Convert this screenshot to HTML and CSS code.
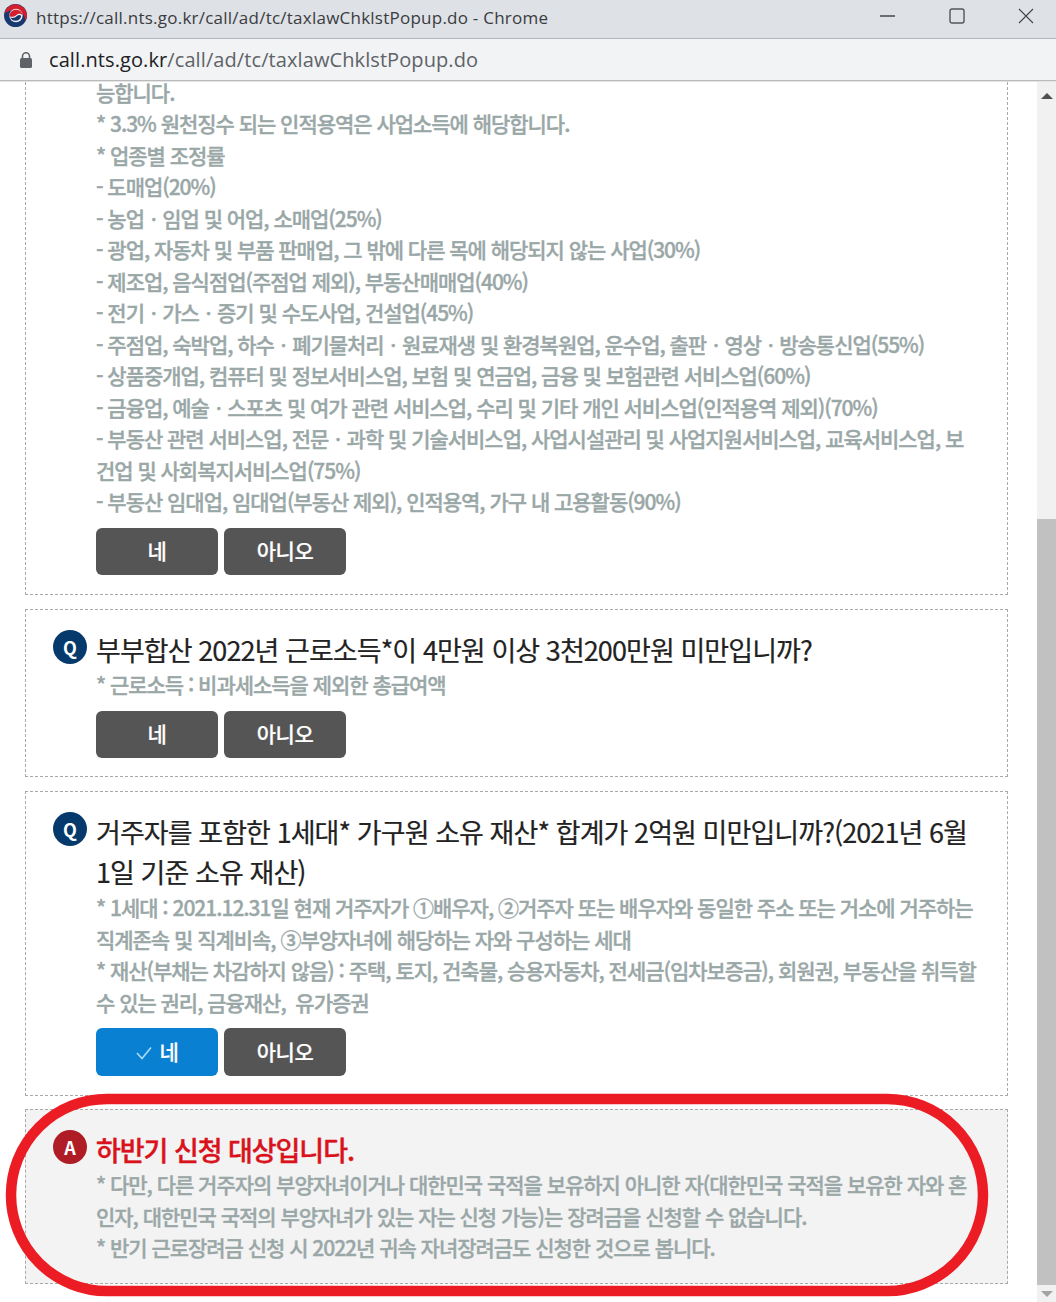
FILE: index.html
```html
<!DOCTYPE html>
<html lang="ko">
<head>
<meta charset="utf-8">
<title>taxlawChklstPopup</title>
<link rel="stylesheet" href="styles.css">
</head>
<body>
<div class="window">
  <header class="titlebar">
    <svg class="emblem" viewBox="0 0 24 24" aria-hidden="true">
      <circle cx="12" cy="12" r="12" fill="#17396f"/>
      <path d="M0.6 9.5A11.8 11.8 0 0 1 23.9 12.5C23.8 14.5 23 16.5 22 17.5C22.5 12 18 6 12 6C7 6 3 8.5 0.6 9.5Z" fill="#d4202e"/>
      <circle cx="12.5" cy="12" r="7" fill="#f3f3f5"/>
      <path d="M5.5 12.5C6 8 9.5 6 13 6C16.5 6 19.5 9 19.5 12C18 9.5 15 9.5 13 11.5C11 13.5 8 14 5.5 12.5Z" fill="#d4202e"/>
      <path d="M6.5 14C9 15 11.5 14.5 13.5 12.5C15 11 17 11 18 12.5C17.5 15.5 15 17.5 12 17.5C9.5 17.5 7.5 16 6.5 14Z" fill="#17396f"/>
    </svg>
    <span class="window-title">https://call.nts.go.kr/call/ad/tc/taxlawChklstPopup.do - Chrome</span>
    <div class="window-controls">
      <svg class="ctl" viewBox="0 0 16 16" aria-hidden="true"><path d="M0 8H15" stroke="#222" stroke-width="1.2"/></svg>
      <svg class="ctl" viewBox="0 0 16 16" aria-hidden="true"><rect x="1" y="1" width="14" height="14" rx="2" fill="none" stroke="#555" stroke-width="1.4"/></svg>
      <svg class="ctl" viewBox="0 0 16 16" aria-hidden="true"><path d="M1 1L15 15M15 1L1 15" stroke="#444" stroke-width="1.1"/></svg>
    </div>
  </header>
  <div class="addressbar">
    <svg class="lock" viewBox="0 0 14 18" aria-hidden="true">
      <path d="M3.5 8V5.2a3.5 3.5 0 0 1 7 0V8" fill="none" stroke="#5f6368" stroke-width="1.6"/>
      <rect x="1" y="7" width="12" height="10" rx="1.5" fill="#5f6368"/>
    </svg>
    <span class="url"><span class="url-host">call.nts.go.kr</span>/call/ad/tc/taxlawChklstPopup.do</span>
  </div>
  <div class="viewport">
    <main class="content">
      <section class="card card-clipped">
        <p class="note">능합니다.<br>* 3.3% 원천징수 되는 인적용역은 사업소득에 해당합니다.<br>* 업종별 조정률<br>- 도매업(20%)<br>- 농업ㆍ임업 및 어업, 소매업(25%)<br>- 광업, 자동차 및 부품 판매업, 그 밖에 다른 목에 해당되지 않는 사업(30%)<br>- 제조업, 음식점업(주점업 제외), 부동산매매업(40%)<br>- 전기ㆍ가스ㆍ증기 및 수도사업, 건설업(45%)<br>- 주점업, 숙박업, 하수ㆍ폐기물처리ㆍ원료재생 및 환경복원업, 운수업, 출판ㆍ영상ㆍ방송통신업(55%)<br>- 상품중개업, 컴퓨터 및 정보서비스업, 보험 및 연금업, 금융 및 보험관련 서비스업(60%)<br>- 금융업, 예술ㆍ스포츠 및 여가 관련 서비스업, 수리 및 기타 개인 서비스업(인적용역 제외)(70%)<br>- 부동산 관련 서비스업, 전문ㆍ과학 및 기술서비스업, 사업시설관리 및 사업지원서비스업, 교육서비스업, 보<br>건업 및 사회복지서비스업(75%)<br>- 부동산 임대업, 임대업(부동산 제외), 인적용역, 가구 내 고용활동(90%)</p>
        <div class="actions">
          <button class="btn">네</button>
          <button class="btn">아니오</button>
        </div>
      </section>
      <section class="card card-short">
        <div class="head">
          <span class="badge badge-q">Q</span>
          <h2 class="title">부부합산 2022년 근로소득*이 4만원 이상 3천200만원 미만입니까?</h2>
        </div>
        <p class="note">* 근로소득 : 비과세소득을 제외한 총급여액</p>
        <div class="actions">
          <button class="btn">네</button>
          <button class="btn">아니오</button>
        </div>
      </section>
      <section class="card card-tall">
        <div class="head">
          <span class="badge badge-q">Q</span>
          <h2 class="title">거주자를 포함한 1세대* 가구원 소유 재산* 합계가 2억원 미만입니까?(2021년 6월<br>1일 기준 소유 재산)</h2>
        </div>
        <p class="note">* 1세대 : 2021.12.31일 현재 거주자가 ①배우자, ②거주자 또는 배우자와 동일한 주소 또는 거소에 거주하는<br>직계존속 및 직계비속, ③부양자녀에 해당하는 자와 구성하는 세대<br>* 재산(부채는 차감하지 않음) : 주택, 토지, 건축물, 승용자동차, 전세금(임차보증금), 회원권, 부동산을 취득할<br>수 있는 권리, 금융재산,&nbsp; 유가증권</p>
        <div class="actions">
          <button class="btn btn-on">
            <svg class="check" viewBox="0 0 16 14" aria-hidden="true"><path d="M1 7L6 12.5L15 1.5" fill="none" stroke="#a9dcf5" stroke-width="1.6"/></svg>네</button>
          <button class="btn btn-tall">아니오</button>
        </div>
      </section>
      <section class="card card-answer">
        <div class="head">
          <span class="badge badge-a">A</span>
          <h2 class="title title-red">하반기 신청 대상입니다.</h2>
        </div>
        <p class="note">* 다만, 다른 거주자의 부양자녀이거나 대한민국 국적을 보유하지 아니한 자(대한민국 국적을 보유한 자와 혼<br>인자, 대한민국 국적의 부양자녀가 있는 자는 신청 가능)는 장려금을 신청할 수 없습니다.<br>* 반기 근로장려금 신청 시 2022년 귀속 자녀장려금도 신청한 것으로 봅니다.</p>
      </section>
    </main>
    <div class="scrollbar">
      <div class="arrow arrow-up"></div>
      <div class="track"><div class="thumb"></div></div>
      <div class="arrow arrow-down"></div>
    </div>
    <svg class="ring" viewBox="0 0 1056 1302" aria-hidden="true">
      <rect x="11" y="1098" width="972" height="192" rx="96" ry="96" fill="none" stroke="#ec1c24" stroke-width="10.5"/>
    </svg>
  </div>
</div>
</body>
</html>
```
FILE: styles.css
```css
* { box-sizing: border-box; }
html, body { margin: 0; padding: 0; height: 100%; overflow: hidden; background: #fff; }
.window { width: 1056px; height: 1302px; display: flex; flex-direction: column; font-family: "Noto Sans CJK KR", "Noto Sans", sans-serif; }

.titlebar { height: 39px; flex: none; background: #dee1e6; border-bottom: 1px solid #b4b6bb; display: flex; align-items: center; padding-left: 4px; padding-bottom: 4px; }
.emblem { width: 23px; height: 23px; margin-top: -3px; flex: none; }
.window-title { margin-left: 9px; font-family: "Open Sans", sans-serif; font-size: 17px; color: #3a3c40; white-space: nowrap; letter-spacing: 0.24px; }
.window-controls { margin-left: auto; display: flex; align-items: center; gap: 53px; padding-right: 22px; margin-top: -3px; }
.ctl { width: 16px; height: 16px; display: block; }

.addressbar { height: 42px; flex: none; background: #f1f3f4; border-bottom: 1px solid #b8babd; box-shadow: inset 0 -1px 0 #f1f3f4; display: flex; align-items: center; padding-left: 19px; }
.lock { width: 14px; height: 18px; flex: none; }
.url { margin-left: 16px; font-family: "Open Sans", sans-serif; font-size: 20px; color: #5f6368; white-space: nowrap; letter-spacing: 0.09px; }
.url-host { color: #202124; }

.viewport { flex: 1; position: relative; display: flex; overflow: hidden; border-top: 1px solid #e4e4e4; }
.content { width: 1037px; flex: none; padding: 0 29px 0 25px; display: flex; flex-direction: column; gap: 14px; }

.card { border: 1px dashed #a9a9a9; padding: 20px 40px 18px 70px; background: #fff; }
.card-clipped { border-top: 0; margin-top: -5.5px; padding-top: 0; height: 518.5px; }
.card-short { height: 168px; }
.card-tall { height: 305px; }
.card-answer { height: 175px; margin-top: -1px; background: #f3f3f3; }

.head { position: relative; }
.badge { position: absolute; left: -43px; top: 0; width: 34px; height: 34px; border-radius: 50%; color: #fff; font-size: 18px; font-weight: 700; display: flex; align-items: center; justify-content: center; }
.badge-q { background: #063a6c; }
.badge-a { background: #b01c25; }
.title { margin: 0; font-size: 27px; line-height: 40px; font-weight: 400; letter-spacing: -0.93px; color: #222; white-space: nowrap; -webkit-text-stroke: 0.2px #222; }
.title-red { color: #d9121b; font-weight: 500; letter-spacing: -1.05px; -webkit-text-stroke: 0.4px #d9121b; }
.note { margin: 0; font-size: 21px; line-height: 31.5px; font-weight: 500; letter-spacing: -1.03px; color: #9aa7a7; white-space: nowrap; -webkit-text-stroke: 0.35px #9aa7a7; }
.card-short .note { margin-top: -1px; }
.card-tall .note { margin-top: 0; }
.card-answer .note { margin-top: -1px; }

.actions { display: flex; gap: 6px; margin-top: 10px; align-items: flex-start; }
.card-clipped .actions { margin-top: 10.5px; }
.btn { width: 122px; height: 47px; border: 0; border-radius: 6px; background: #555; color: #fff; font-family: inherit; font-size: 21px; font-weight: 500; display: flex; align-items: center; justify-content: center; padding: 0 0 3px; letter-spacing: -0.02em; -webkit-text-stroke: 0.2px #fff; }
.btn-on { height: 48px; background: #0a80d2; }
.btn-tall { height: 48px; }
.check { width: 16px; height: 14px; margin-right: 8px; margin-top: 5px; }

.scrollbar { width: 19px; flex: none; background: #f1f1f1; display: flex; flex-direction: column; }
.arrow { height: 17px; flex: none; position: relative; }
.arrow::after { content: ""; position: absolute; left: 4px; border-left: 6px solid transparent; border-right: 6px solid transparent; }
.arrow-up::after { top: 11px; border-bottom: 6px solid #505050; }
.arrow-down::after { top: 6px; border-top: 6px solid #a3a3a3; }
.track { flex: 1; padding-top: 420px; display: flex; }
.thumb { width: 100%; background: #c1c1c1; }

.ring { position: absolute; left: 0; top: -81px; width: 1056px; height: 1302px; pointer-events: none; }
```
